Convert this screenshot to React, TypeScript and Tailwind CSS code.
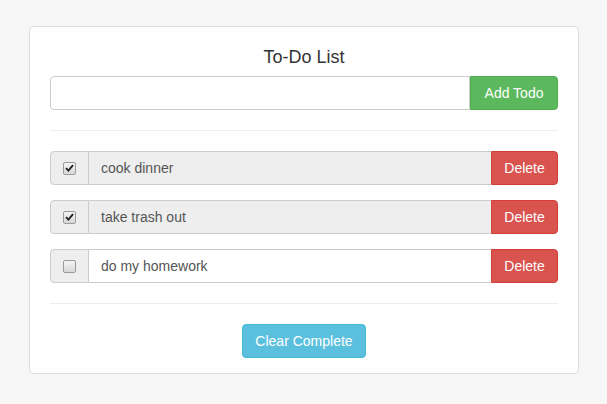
const todos = [
  { text: 'cook dinner', done: true },
  { text: 'take trash out', done: true },
  { text: 'do my homework', done: false },
]

const Check = ({ checked }: { checked: boolean }) => (
  <span className="flex h-[13px] w-[13px] items-center justify-center rounded-[2px] border border-[#9a9a9a] bg-gradient-to-b from-[#f4f4f4] to-[#d8d8d8]">
    {checked && (
      <svg width="9" height="8" viewBox="0 0 9 8">
        <path d="M1 4.2 L3.4 6.6 L8 1.2" fill="none" stroke="#222" strokeWidth="1.9" />
      </svg>
    )}
  </span>
)

export default function App() {
  return (
    <div className="min-h-[404px] bg-[#f7f7f7] pl-[29px] pr-[28px] pt-[26px] font-['Liberation_Sans',Arial,sans-serif] text-[14px] text-[#333]">
      <div className="rounded-[4px] border border-[#ddd] bg-white px-5 pt-5 pb-[15px]">
        <h3 className="mb-[9px] text-center text-[18px] leading-[20px]">To-Do List</h3>
        <div className="flex h-[34px]">
          <input className="h-[34px] flex-1 rounded-l-[4px] border border-[#ccc] px-3 text-[#555] outline-none" />
          <button className="h-[34px] w-[88px] rounded-r-[4px] border border-[#4cae4c] bg-[#5cb85c] text-white">
            Add Todo
          </button>
        </div>
        <hr className="my-5 border-t border-[#eee]" />
        <ul>
          {todos.map((t, i) => (
            <li key={i} className="mb-[15px] flex h-[34px]">
              <span className="flex w-[39px] items-center justify-center rounded-l-[4px] border border-[#ccc] bg-[#eee]">
                <Check checked={t.done} />
              </span>
              <span
                className={`flex flex-1 items-center border-y border-[#ccc] px-3 text-[#555] ${t.done ? 'bg-[#eee]' : 'bg-white'}`}
              >
                {t.text}
              </span>
              <button className="w-[67px] rounded-r-[4px] border border-[#d43f3a] bg-[#d9534f] text-white">
                Delete
              </button>
            </li>
          ))}
        </ul>
        <hr className="mt-5 mb-5 border-t border-[#eee]" />
        <div className="flex justify-center">
          <button className="h-[34px] rounded-[4px] border border-[#46b8da] bg-[#5bc0de] px-3 text-white">
            Clear Complete
          </button>
        </div>
      </div>
    </div>
  )
}
